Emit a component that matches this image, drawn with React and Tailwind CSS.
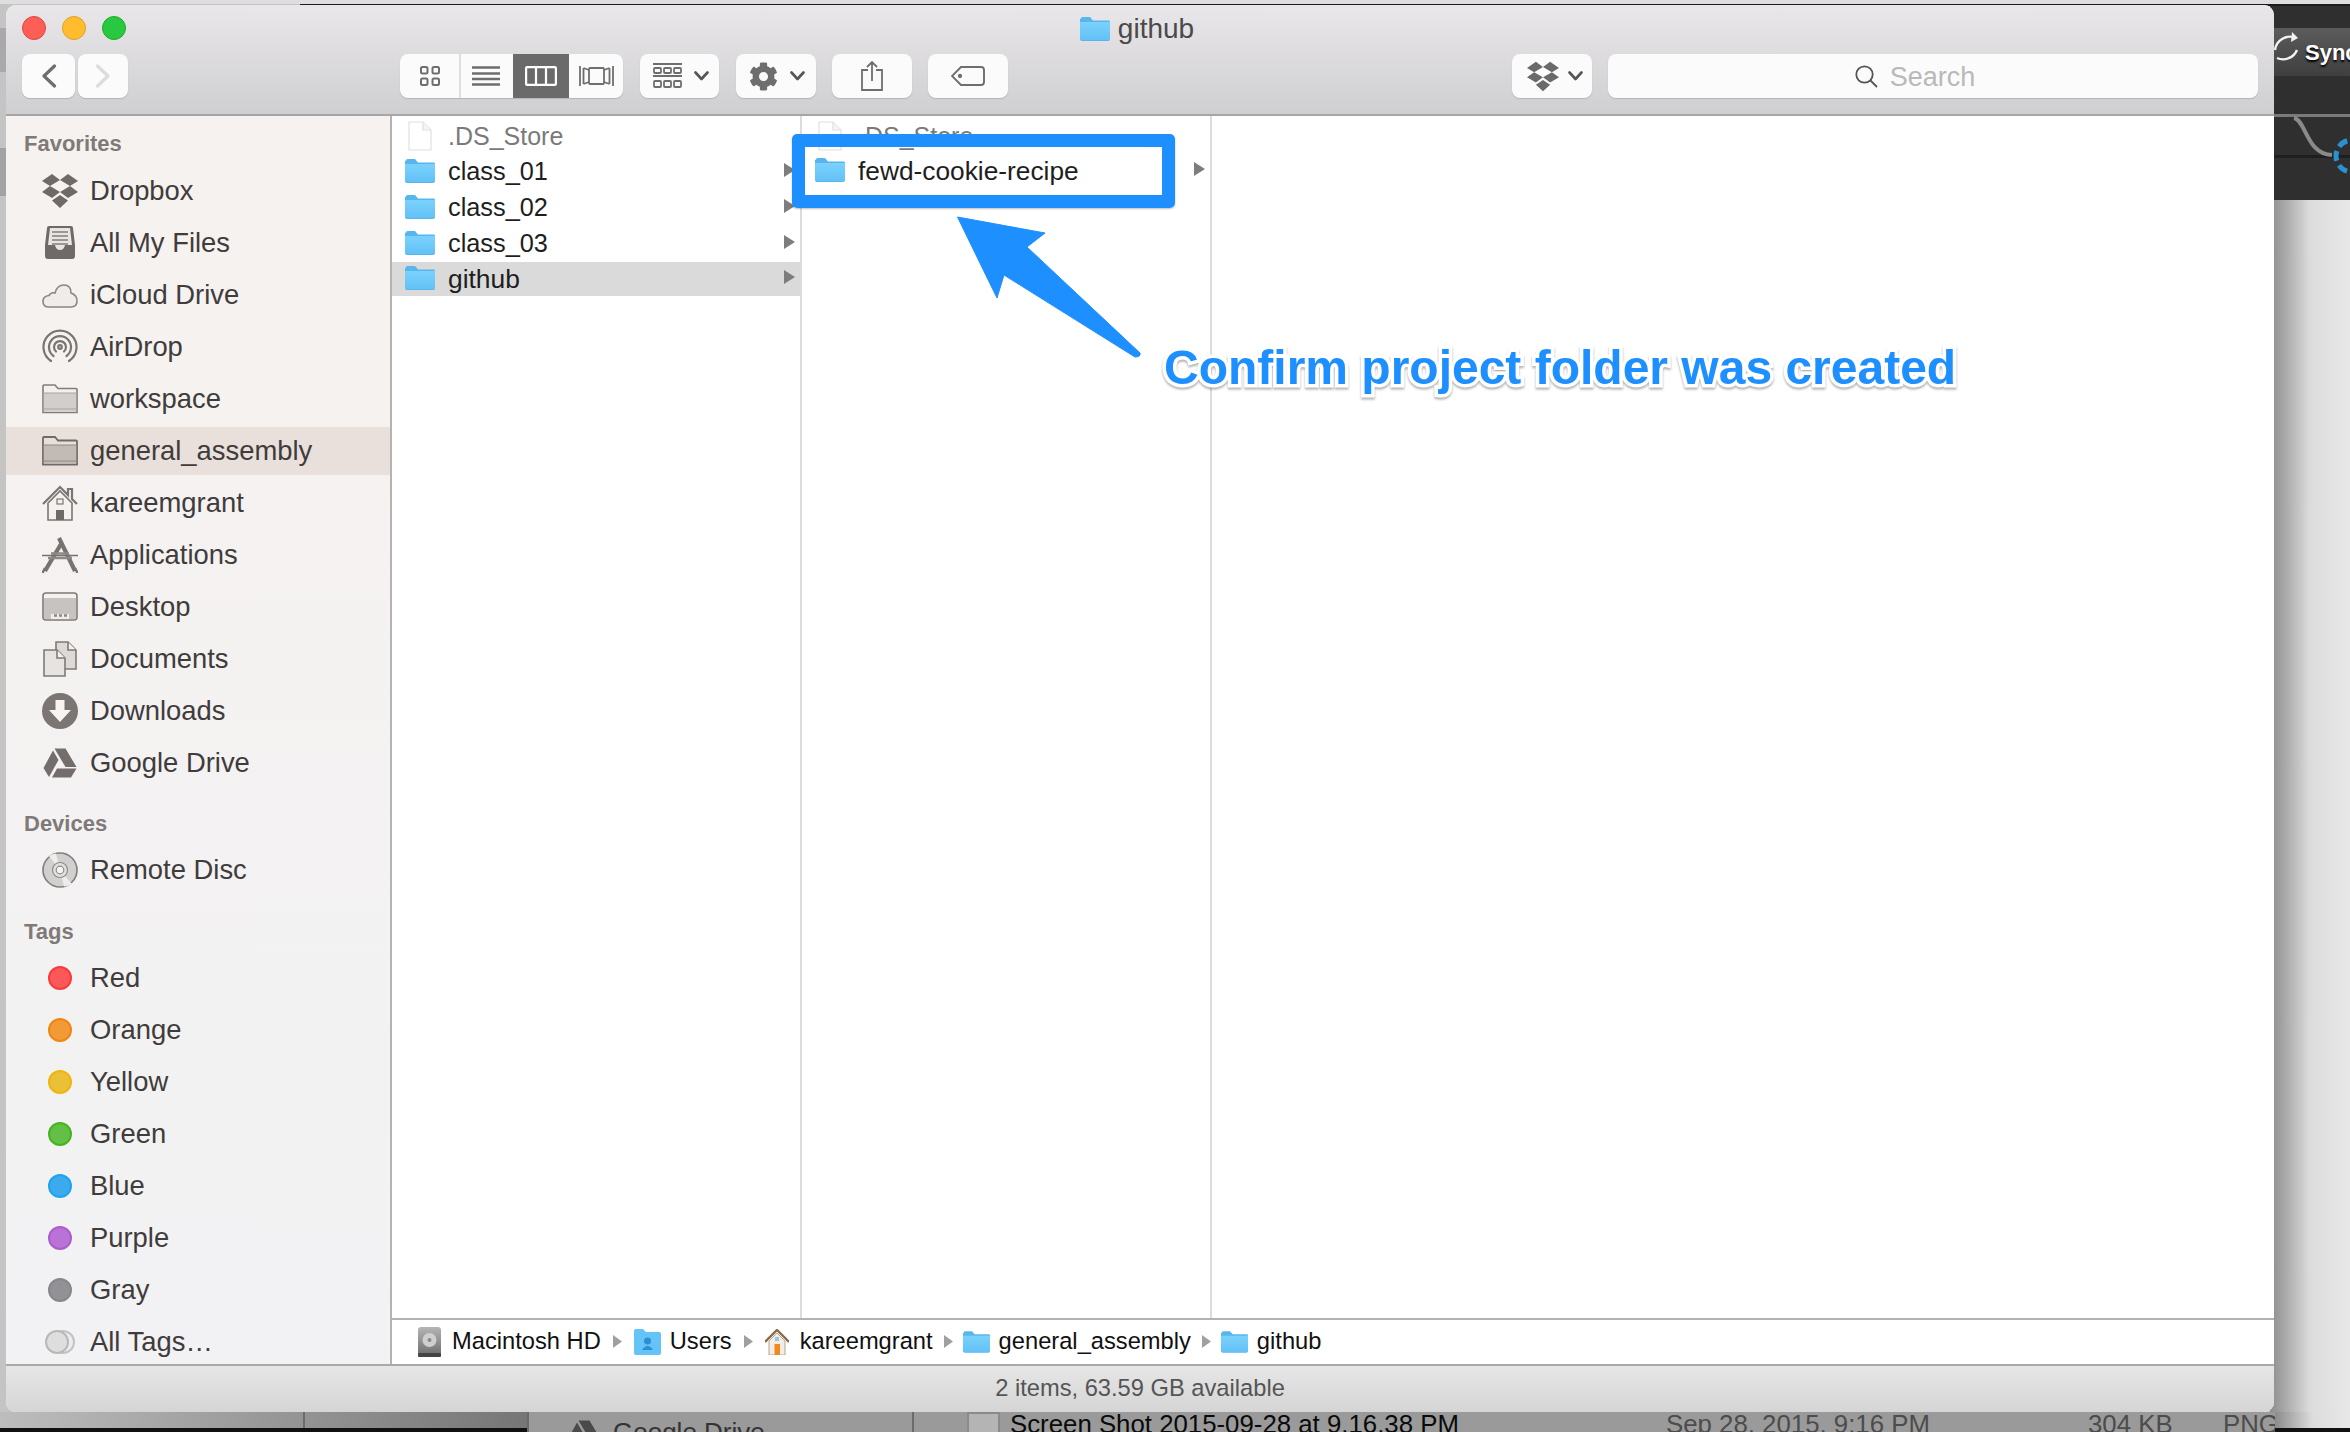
import React from "react";
import { FaCog } from "react-icons/fa";

const G = "#6e6e6e";
const S = "#6f6a68";

function Chevron({ dir = "left", color = G, w = 16, h = 24, sw = 3.2 }) {
  return (
    <svg width={w} height={h} viewBox="0 0 16 24" fill="none" stroke={color} strokeWidth={sw} strokeLinecap="round" strokeLinejoin="round">
      <path d={dir === "left" ? "M13.5 2 L3 12 L13.5 22" : "M2.5 2 L13 12 L2.5 22"} />
    </svg>
  );
}
function Down() {
  return (
    <svg width="15" height="10" viewBox="0 0 15 10" fill="none" stroke="#555" strokeWidth="2.6" strokeLinecap="round" strokeLinejoin="round">
      <path d="M1.5 1.5 L7.5 8 L13.5 1.5" />
    </svg>
  );
}
function DropboxGlyph({ w = 36, h = 36, color = S }) {
  return (
    <svg width={w} height={h} viewBox="0 0 36 36" fill={color} preserveAspectRatio="none">
      <path d="M0 8 L10 1 L18 7 L8 13 Z M18 7 L26 1 L36 8 L28 13 Z M0 19 L8 13 L18 19 L10 25 Z M18 19 L28 13 L36 19 L26 25 Z M10 27.5 L18 22 L26 27.5 L18 35 Z" />
    </svg>
  );
}
function FolderBlue({ w = 30, h = 24 }) {
  const id = "fb" + w;
  return (
    <svg width={w} height={h} viewBox="0 0 30 24">
      <defs>
        <linearGradient id={id} x1="0" y1="0" x2="0" y2="1">
          <stop offset="0" stopColor="#7ad2fc" />
          <stop offset="1" stopColor="#63c1f6" />
        </linearGradient>
      </defs>
      <path d="M1 1.5 Q1 0 2.5 0 H10 L13 3.5 H29 Q30 3.5 30 5 V22 Q30 24 28 24 H2 Q0 24 0 22 V2 Z" fill="#58b6ee" />
      <path d="M0 5 H30 V22 Q30 23 28.5 23 H1.5 Q0 23 0 22 Z" fill={`url(#${id})`} />
    </svg>
  );
}
function FileIcon() {
  return (
    <svg width="24" height="30" viewBox="0 0 24 30" fill="#fff" stroke="#dfdfdf" strokeWidth="1.2">
      <path d="M1 1 H15 L23 9 V29 H1 Z" />
      <path d="M15 1 V9 H23" fill="#f4f4f4" />
    </svg>
  );
}

const sideIcons = {
  dropbox: <DropboxGlyph />,
  files: (
    <svg width="36" height="36" viewBox="0 0 36 36">
      <path d="M5 3 Q5 1 7 1 H29 Q31 1 31 3 L33 20 V31 Q33 34 30 34 H6 Q3 34 3 31 V20 Z" fill={S} />
      <path d="M8 3 H28 L30 20 H23 Q22 25 18 25 Q14 25 13 20 H6 Z" fill="#e7e4e2" />
      <path d="M10 7 H26 M10 11 H26 M10 15 H26 M10 19 H26" stroke="#837e7c" strokeWidth="1.4" />
    </svg>
  ),
  cloud: (
    <svg width="36" height="36" viewBox="0 0 36 36" fill="#efecea" stroke="#8b8684" strokeWidth="1.6">
      <path d="M7 30 Q1 30 1 24.5 Q1 19 7 18.5 Q9 15 13 16 Q15 8 22 8 Q29 8 29 16 Q35 18 35 24 Q35 30 29 30 Z" />
    </svg>
  ),
  airdrop: (
    <svg width="36" height="36" viewBox="0 0 36 36" fill="none" stroke="#7a7573" strokeWidth="2.2" strokeLinecap="round">
      <path d="M9 32 A16.5 16.5 0 1 1 27 32" />
      <path d="M11.5 27 A11 11 0 1 1 24.5 27" />
      <path d="M14 22.5 A6 6 0 1 1 22 22.5" />
      <circle cx="18" cy="18" r="1.8" />
    </svg>
  ),
  folder: (
    <svg width="36" height="30" viewBox="0 0 36 30">
      <path d="M1 28.5 V2 Q1 1 2 1 H13 L16 4.5 H34 Q35 4.5 35 5.5 V28.5 Z" fill="#f3f0ee" stroke="#827d7a" strokeWidth="1.6" />
      <path d="M1.8 9 H34.2 V27.8 H1.8 Z" fill="#d2cecb" />
      <path d="M1 9 H35 M1 25 H35" stroke="#a8a3a0" strokeWidth="1" />
    </svg>
  ),
  folderSel: (
    <svg width="36" height="30" viewBox="0 0 36 30">
      <path d="M1 28.5 V2 Q1 1 2 1 H13 L16 4.5 H34 Q35 4.5 35 5.5 V28.5 Z" fill="#e8dfda" stroke="#6f6a68" strokeWidth="1.8" />
      <path d="M1.8 9 H34.2 V27.8 H1.8 Z" fill="#c2bab5" />
      <path d="M1 9 H35 M1 25 H35" stroke="#8f8884" strokeWidth="1" />
    </svg>
  ),
  home: (
    <svg width="36" height="36" viewBox="0 0 36 36">
      <path d="M6 18 V35 H30 V18 L18 6 Z" fill="#f4f1ef" stroke="#7a7573" strokeWidth="1.6" />
      <path d="M1 19 L18 2 L26 10 V4 H30 V14 L35 19" fill="none" stroke="#7a7573" strokeWidth="2.2" />
      <rect x="15" y="14" width="6" height="5" fill="none" stroke="#7a7573" strokeWidth="1.2" />
      <rect x="14" y="25" width="8" height="10" fill="#6f6a68" />
    </svg>
  ),
  apps: (
    <svg width="36" height="36" viewBox="0 0 36 36" fill="none" stroke="#77726f">
      <path d="M17 1 L33 34" strokeWidth="4.2" />
      <path d="M19 7 L3 34" strokeWidth="4.2" />
      <path d="M0 18.5 H36" strokeWidth="1.6" />
      <path d="M9 16.5 H27 M6 21 H30" strokeWidth="2.6" stroke="#8d8885" />
      <path d="M0.5 36 L3 31 M35.5 36 L33 31" strokeWidth="2.4" />
    </svg>
  ),
  desktop: (
    <svg width="36" height="30" viewBox="0 0 36 30">
      <rect x="1" y="1" width="34" height="27" rx="3" fill="#f4f1ef" stroke="#7f7a78" strokeWidth="1.6" />
      <path d="M2 6 H34 V25 Q34 27 32 27 H4 Q2 27 2 25 Z" fill="#c7c3c0" />
      <path d="M9 22 H27 V27 H9 Z" fill="#efecea" />
      <path d="M12 23.5 H15 M17 23.5 H20 M22 23.5 H25" stroke="#8d8885" strokeWidth="2.4" />
    </svg>
  ),
  docs: (
    <svg width="34" height="36" viewBox="0 0 34 36" stroke="#7f7a78" strokeWidth="1.6">
      <path d="M13 1 H25 L33 9 V28 H13 Z" fill="#dcd9d7" />
      <path d="M25 1 V9 H33" fill="#f4f1ef" />
      <path d="M1 9 H14 L22 17 V35 H1 Z" fill="#e6e3e1" />
      <path d="M14 9 V17 H22" fill="#f4f1ef" />
    </svg>
  ),
  downloads: (
    <svg width="36" height="36" viewBox="0 0 36 36">
      <circle cx="18" cy="18" r="18" fill="#7b7674" />
      <path d="M13.5 7 H22.5 V17 H29 L18 29 L7 17 H13.5 Z" fill="#f7f4f2" />
    </svg>
  ),
  drive: (
    <svg width="34" height="30" viewBox="0 0 34 30" fill="#736e6c">
      <path d="M11.5 0.5 H22.5 L33.5 19 H22.5 Z" />
      <path d="M10 2.5 L15.5 12 L6 29 L0.5 20 Z" />
      <path d="M9 29.5 L14 20.5 H33.5 L28 29.5 Z" />
    </svg>
  ),
  disc: (
    <svg width="36" height="36" viewBox="0 0 36 36">
      <circle cx="18" cy="18" r="17" fill="#d2d0ce" stroke="#827d7a" strokeWidth="1.6" />
      <path d="M18 18 L7 4 A17 17 0 0 1 14 1.5 Z M18 18 L30 32 A17 17 0 0 1 22 34.5 Z" fill="#efedec" />
      <circle cx="18" cy="18" r="7.5" fill="#e2e0de" stroke="#8f8a87" strokeWidth="1.2" />
      <circle cx="18" cy="18" r="3.8" fill="#f6f3f1" stroke="#8f8a87" strokeWidth="1.2" />
    </svg>
  ),
};

function Tag({ fill, border }) {
  return <span className="block w-[24px] h-[24px] rounded-full border-2" style={{ background: fill, borderColor: border }} />;
}
function AllTags() {
  return (
    <span className="relative block w-[30px] h-[24px] -ml-[1px]">
      <span className="absolute left-[6px] top-0 w-[24px] h-[24px] rounded-full border-2 border-[#c2c2c2] bg-[#ececec]" />
      <span className="absolute left-0 top-0 w-[24px] h-[24px] rounded-full border-2 border-[#b8b8b8] bg-[#dedede]" />
    </span>
  );
}

const favorites = [
  ["Dropbox", "dropbox"], ["All My Files", "files"], ["iCloud Drive", "cloud"], ["AirDrop", "airdrop"], ["workspace", "folder"],
  ["general_assembly", "folderSel", true], ["kareemgrant", "home"], ["Applications", "apps"], ["Desktop", "desktop"],
  ["Documents", "docs"], ["Downloads", "downloads"], ["Google Drive", "drive"],
];
const tags = [
  ["Red", "#fd5858", "#f73a3a"], ["Orange", "#f29a38", "#ef8611"], ["Yellow", "#eac036", "#f1b30d"], ["Green", "#63bf45", "#46b41f"],
  ["Blue", "#3caaec", "#1ea3ee"], ["Purple", "#bb72d6", "#ab5ccd"], ["Gray", "#929296", "#87878a"],
];

function SideRow({ icon, label, selected }) {
  return (
    <div className={selected ? "flex items-center h-[48px] my-[2px] bg-[#e9e0db]" : "flex items-center h-[52px]"}>
      <span className="ml-[36px] w-[36px] flex justify-center items-center shrink-0">{icon}</span>
      <span className="ml-[12px] text-[27.4px] leading-none text-[#403c3c]">{label}</span>
    </div>
  );
}
function SideLabel({ children, className }) {
  return <div className={`pl-[18px] text-[22px] leading-[30px] font-bold text-[#7f7a78] ${className}`}>{children}</div>;
}
function Triangle({ color = "#7d7d7d" }) {
  return (
    <svg width="11" height="14" viewBox="0 0 11 14"><path d="M0 0 L11 7 L0 14 Z" fill={color} /></svg>
  );
}
function ColRow({ name, selected, arrow = true, dim, file, size = "text-[25.3px]" }) {
  return (
    <div className={selected ? "flex items-center h-[34px] mb-[2px] -ml-[13px] pl-[13px] pr-[5px] bg-[#dadada]" : "flex items-center h-[36px] pr-[5px]"}>
      <span className={`w-[30px] flex justify-center shrink-0 ${file ? "" : "-translate-y-[1px]"}`}>{file ? <FileIcon /> : <FolderBlue />}</span>
      <span className={`ml-[13px] leading-none ${size} ${dim ? "text-[#7a7a7a]" : "text-[#1e1e1e]"}`}>{name}</span>
      {arrow && <span className="ml-auto flex -translate-y-[2px]"><Triangle /></span>}
    </div>
  );
}
function Btn({ className = "", children }) {
  return (
    <div className={`h-[44px] bg-[#fbfbfb] rounded-[8px] shadow-[0_1px_1px_#b4b4b4] flex items-center justify-center shrink-0 ${className}`}>{children}</div>
  );
}
function PathArrow({ className = "mx-[11px]" }) {
  return <span className={`flex ${className}`}><svg width="9" height="13" viewBox="0 0 9 13"><path d="M0 0 L9 6.5 L0 13 Z" fill="#a0a0a0" /></svg></span>;
}
function PathItem({ icon, label }) {
  return (
    <span className="flex items-center">
      <span className="flex w-[27px] justify-center">{icon}</span>
      <span className="ml-[9px] text-[23.7px] leading-none text-[#111]">{label}</span>
    </span>
  );
}

export default function App() {
  return (
    <div className="relative w-[2350px] h-[1432px] overflow-hidden bg-[#c4c4c4] font-['Liberation_Sans',sans-serif]">
      {/* desktop behind the window */}
      <div className="absolute left-0 top-0 w-[2350px] h-[4px] bg-[#dedede]" />
      <div className="absolute left-[300px] top-[4px] w-[2050px] h-[2px] bg-[#1c1c1c]" />
      <div className="absolute left-0 top-[28px] w-[6px] h-[44px] bg-[#a9a9a9]" />
      <div className="absolute left-0 top-[148px] w-[6px] h-[48px] bg-[#a3a3a3]" />

      <div className="absolute left-[2270px] top-[6px] w-[80px] h-[194px] bg-[#2f2f2f]">
        <div className="h-[48px] mt-[22px] bg-gradient-to-b from-[#5c5c5c] to-[#3f3f3f] flex items-center pl-[35px]">
          <span className="text-[22px] font-bold text-white [text-shadow:0_2px_2px_#000]">Sync</span>
        </div>
        <div className="absolute left-0 top-[108px] w-full h-[3px] bg-[#7a7a7a]" />
        <div className="absolute left-0 top-[149px] w-full h-[3px] bg-[#1f1f1f]" />
      </div>
      <svg className="absolute left-[2270px] top-[28px]" width="80" height="150" viewBox="0 0 80 150" fill="none">
        <path d="M26 10 A15 15 0 0 0 5 22 M7 30 A15 15 0 0 0 27 22" stroke="#f2f2f2" strokeWidth="2.4" />
        <path d="M22 4 L28 10 L21 14 Z" fill="#f2f2f2" />
        <path d="M24 90 C36 92 36 126 62 127" stroke="#8a8a8a" strokeWidth="4" />
        <circle cx="82" cy="128" r="16" stroke="#2a92d2" strokeWidth="5" strokeDasharray="10 5" />
      </svg>
      <div className="absolute left-[2270px] top-[200px] w-[80px] h-[1228px] bg-gradient-to-r from-[#8c8c8c] via-[#dcdcdc] to-[#e8e8e8]" />

      <div className="absolute left-0 top-[1412px] w-[2350px] h-[20px] bg-[#9a9a9a] overflow-hidden">
        <div className="absolute left-0 top-0 w-[528px] h-[16px] bg-gradient-to-r from-[#bdbdbd] to-[#767676]" />
        <div className="absolute left-0 top-[16px] w-[528px] h-[4px] bg-[#111]" />
        <div className="absolute left-[303px] top-0 w-[2px] h-[16px] bg-[#6b6b6b]" />
        <div className="absolute left-[527px] top-0 w-[2px] h-[20px] bg-[#6b6b6b]" />
        <div className="absolute left-[912px] top-0 w-[2px] h-[20px] bg-[#6b6b6b]" />
        <svg className="absolute left-[567px] top-[8px]" width="34" height="30" viewBox="0 0 34 30" fill="#4a4a4a"><path d="M11.5 0.5 H22.5 L33.5 19 H22.5 Z M10 2.5 L15.5 12 L6 29 L0.5 20 Z" /></svg>
        <span className="absolute left-[613px] top-[6px] text-[26px] leading-[28px] whitespace-nowrap text-[#333]">Google Drive</span>
        <span className="absolute left-[967px] top-[0px] w-[33px] h-[24px] border-2 border-[#8a8a8a] bg-[#b4b4b4]" />
        <span className="absolute left-[1010px] top-[-2px] text-[25.8px] leading-[28px] whitespace-nowrap text-[#0a0a0a]">Screen Shot 2015-09-28 at 9.16.38 PM</span>
        <span className="absolute left-[1666px] top-[-2px] text-[25.8px] leading-[28px] whitespace-nowrap text-[#4c4c4c]">Sep 28, 2015, 9:16 PM</span>
        <span className="absolute left-[2088px] top-[-2px] text-[25.8px] leading-[28px] whitespace-nowrap text-[#4c4c4c]">304 KB</span>
        <span className="absolute left-[2223px] top-[-2px] text-[25.8px] leading-[28px] whitespace-nowrap text-[#4c4c4c]">PNG</span>
        <div className="absolute left-[2275px] top-0 w-[75px] h-[16px] bg-gradient-to-r from-[#8c8c8c] via-[#dcdcdc] to-[#e8e8e8]" />
        <div className="absolute left-[2275px] top-[16px] w-[75px] h-[4px] bg-[#111]" />
      </div>

      {/* Finder window */}
      <div className="absolute left-[6px] top-[5px] w-[2268px] h-[1407px] flex flex-col rounded-[10px] overflow-hidden bg-white">
        <div className="h-[111px] shrink-0 border-b-2 border-[#a6a6a6] bg-gradient-to-b from-[#e9e7e9] to-[#cfced0]">
          <div className="h-[46px] grid grid-cols-[1fr_auto_1fr] items-center pl-[16px]">
            <div className="flex gap-[16px]">
              <span className="block w-[24px] h-[24px] rounded-full border border-[#e0443e] bg-[#fd5f57]" />
              <span className="block w-[24px] h-[24px] rounded-full border border-[#dfa023] bg-[#febc2e]" />
              <span className="block w-[24px] h-[24px] rounded-full border border-[#1aab29] bg-[#28c940]" />
            </div>
            <div className="flex items-center pr-[22px] translate-y-[1px]">
              <FolderBlue />
              <span className="ml-[8px] text-[28px] leading-none text-[#4a4a4a]">github</span>
            </div>
            <div />
          </div>
          <div className="mt-[3px] flex pl-[16px] pr-[16px]">
            <Btn className="w-[53px]"><Chevron /></Btn>
            <Btn className="w-[50px] ml-[3px]"><Chevron dir="right" color="#dcdcdc" /></Btn>

            <div className="ml-[272px] w-[223px] h-[44px] bg-[#fbfbfb] rounded-[8px] shadow-[0_1px_1px_#b4b4b4] overflow-hidden flex shrink-0">
              <div className="w-[61px] flex items-center justify-center border-r-2 border-[#dedede]">
                <svg width="20" height="20" viewBox="0 0 20 20" fill="none" stroke={G} strokeWidth="2"><rect x="1" y="1" width="6.5" height="6.5" rx="1.5" /><rect x="12.5" y="1" width="6.5" height="6.5" rx="1.5" /><rect x="1" y="12.5" width="6.5" height="6.5" rx="1.5" /><rect x="12.5" y="12.5" width="6.5" height="6.5" rx="1.5" /></svg>
              </div>
              <div className="w-[52px] flex items-center justify-center pr-[2px]">
                <svg width="28" height="20" viewBox="0 0 28 20" stroke={G} strokeWidth="2.4"><path d="M0 1.5 H28 M0 7.5 H28 M0 13 H28 M0 18.5 H28" /></svg>
              </div>
              <div className="w-[56px] flex items-center justify-center bg-[#6a6a6a]">
                <svg width="32" height="20" viewBox="0 0 32 20" fill="none" stroke="#fff" strokeWidth="2.2"><rect x="1.1" y="1.1" width="29.8" height="17.8" rx="1" /><path d="M11 1 V19 M21 1 V19" /></svg>
              </div>
              <div className="w-[54px] flex items-center justify-center">
                <svg width="35" height="22" viewBox="0 0 35 22" fill="none" stroke={G} strokeWidth="1.8"><rect x="10" y="3" width="15" height="16" rx="1" /><path d="M1 1 V21 M4.5 3 V19 M34 1 V21 M30.5 3 V19 M4.5 3 L10 5 M4.5 19 L10 17 M30.5 3 L25 5 M30.5 19 L25 17" /></svg>
              </div>
            </div>

            <Btn className="w-[79px] ml-[17px] gap-[12px] pl-[3px]">
              <svg width="29" height="26" viewBox="0 0 29 26" fill="none" stroke={G}>
                <path d="M0 1 H29 M0 13 H29" strokeWidth="2" />
                <g strokeWidth="1.8"><rect x="1" y="5" width="7" height="5" rx="1" /><rect x="11" y="5" width="7" height="5" rx="1" /><rect x="21" y="5" width="7" height="5" rx="1" /><rect x="1" y="18" width="7" height="6" rx="1" /><rect x="11" y="18" width="7" height="6" rx="1" /><rect x="21" y="18" width="7" height="6" rx="1" /></g>
              </svg>
              <Down />
            </Btn>
            <Btn className="w-[80px] ml-[17px] gap-[12px] pl-[2px]">
              <FaCog size={29} color={G} />
              <Down />
            </Btn>
            <Btn className="w-[80px] ml-[16px]">
              <svg width="22" height="30" viewBox="0 0 22 30" fill="none" stroke={G} strokeWidth="1.8">
                <path d="M7 9 H1 V29 H21 V9 H15" />
                <path d="M11 20 V1 M6 6 L11 1 L16 6" />
              </svg>
            </Btn>
            <Btn className="w-[80px] ml-[16px]">
              <svg width="34" height="20" viewBox="0 0 34 20" fill="none" stroke={G} strokeWidth="1.9">
                <path d="M10 1 H30 Q33 1 33 4 V16 Q33 19 30 19 H10 L1 10 Z" />
                <circle cx="9" cy="10" r="1.2" fill={G} />
              </svg>
            </Btn>

            <Btn className="w-[80px] ml-[504px] gap-[9px] pl-[5px]">
              <DropboxGlyph w={32} h={31} color="#6a6a6a" />
              <Down />
            </Btn>
            <Btn className="flex-1 ml-[16px] gap-[12px] pr-[36px]">
              <svg width="23" height="23" viewBox="0 0 23 23" fill="none" stroke="#555" strokeWidth="1.8"><circle cx="9.5" cy="9.5" r="8.2" /><path d="M15.5 15.5 L22 22" /></svg>
              <span className="text-[27px] leading-none text-[#b9b9b9] translate-y-[1px]">Search</span>
            </Btn>
          </div>
        </div>

        <div className="h-[1248px] shrink-0 flex">
          <div className="w-[386px] shrink-0 border-r-2 border-[#b3b3b3] bg-gradient-to-b from-[#f6f2ef] to-[#f2f2f4] overflow-hidden">
            <SideLabel className="pt-[13px] pb-[6px]">Favorites</SideLabel>
            {favorites.map(([label, key, sel]) => (
              <SideRow key={label} label={label} icon={sideIcons[key]} selected={sel} />
            ))}
            <SideLabel className="pt-[20px] pb-[5px]">Devices</SideLabel>
            <SideRow label="Remote Disc" icon={sideIcons.disc} />
            <SideLabel className="pt-[21px] pb-[5px]">Tags</SideLabel>
            {tags.map(([label, fill, border]) => (
              <SideRow key={label} label={label} icon={<Tag fill={fill} border={border} />} />
            ))}
            <SideRow label="All Tags…" icon={<AllTags />} />
          </div>

          <div className="flex-1 min-w-0 flex flex-col">
            <div className="flex-1 min-h-0 flex">
              <div className="w-[410px] shrink-0 border-r-2 border-[#dcdcdc] pt-[2px] pl-[13px]">
                <ColRow name=".DS_Store" file arrow={false} dim size="text-[25px]" />
                <ColRow name="class_01" />
                <ColRow name="class_02" />
                <ColRow name="class_03" />
                <ColRow name="github" selected size="text-[26.4px]" />
              </div>
              <div className="w-[410px] shrink-0 border-r-2 border-[#dcdcdc] pt-[2px] pl-[13px]">
                <ColRow name=".DS_Store" file arrow={false} dim size="text-[25px]" />
                <div className="-translate-y-[1px]">
                  <ColRow name="fewd-cookie-recipe" size="text-[26.3px]" />
                </div>
              </div>
              <div className="flex-1" />
            </div>
            <div className="h-[46px] shrink-0 border-t-2 border-[#b2b2b2] flex items-center pl-[24px] pb-[1px]">
              <PathItem label="Macintosh HD" icon={
                <svg width="25" height="32" viewBox="0 0 25 32"><defs><linearGradient id="hd" x1="0" y1="0" x2="0" y2="1"><stop offset="0" stopColor="#b5b5b5" /><stop offset="1" stopColor="#6a6a6a" /></linearGradient></defs><rect x="1" y="1" width="23" height="30" rx="3" fill="url(#hd)" /><circle cx="12.5" cy="14" r="7" fill="#cfcfcf" /><circle cx="12.5" cy="14" r="2" fill="#8a8a8a" /><rect x="1" y="27" width="23" height="4" rx="1" fill="#444" /></svg>
              } />
              <PathArrow className="ml-[12px] mr-[12px]" />
              <PathItem label="Users" icon={
                <svg width="27" height="26" viewBox="0 0 27 26"><path d="M0 2 Q0 0 2 0 H9 L12 3 H25 Q27 3 27 5 V24 Q27 26 25 26 H2 Q0 26 0 24 Z" fill="#64c3f7" /><circle cx="13.5" cy="12" r="3.5" fill="#2b8fd0" /><path d="M8 21 Q13.5 13 19 21 Z" fill="#2b8fd0" /></svg>
              } />
              <PathArrow className="ml-[12px] mr-[11px]" />
              <PathItem label="kareemgrant" icon={
                <svg width="24" height="26" viewBox="0 0 24 26"><path d="M4 12 V26 H20 V12 L12 4 Z" fill="#f2ede6" stroke="#b7a58f" /><path d="M0 13 L12 1 L24 13" fill="none" stroke="#8b6b48" strokeWidth="2.4" /><rect x="9.5" y="15" width="5.5" height="11" fill="#f08a1c" /><rect x="10" y="8" width="4" height="4" fill="#9cc4e0" /></svg>
              } />
              <PathArrow className="ml-[11px] mr-[10px]" />
              <PathItem label="general_assembly" icon={<FolderBlue w={27} h={24} />} />
              <PathArrow className="ml-[11px] mr-[10px]" />
              <PathItem label="github" icon={<FolderBlue w={28} h={24} />} />
            </div>
          </div>
        </div>

        <div className="h-[48px] shrink-0 border-t-2 border-[#a9a9a9] bg-gradient-to-b from-[#e6e6e6] to-[#d5d5d5] flex items-center justify-center pb-[1px]">
          <span className="text-[23.7px] leading-none text-[#555]">2 items, 63.59 GB available</span>
        </div>
      </div>

      {/* annotation */}
      <div className="absolute left-[792px] top-[134px] w-[383px] h-[74px] border-[13px] border-[#1e8fff] rounded-[5px] shadow-[0_1px_2px_rgba(0,0,0,0.25)]" />
      <svg className="absolute left-[950px] top-[210px]" width="200" height="155" viewBox="950 210 200 155">
        <path d="M957.5 217 L1045 233 L1027 247 L1140 353 Q1141 357 1135 357 L1004 275 L997 298 Z" fill="#1e8fff" stroke="#1e8fff" strokeWidth="1" strokeLinejoin="round" />
      </svg>
      <div className="absolute left-[1164px] top-[340px] text-[48px] leading-[56px] font-bold whitespace-nowrap text-[#1e8fff] [-webkit-text-stroke:7px_white] [paint-order:stroke_fill] drop-shadow-[0_2px_1px_rgba(0,0,0,0.3)]">
        Confirm project folder was created
      </div>
    </div>
  );
}
